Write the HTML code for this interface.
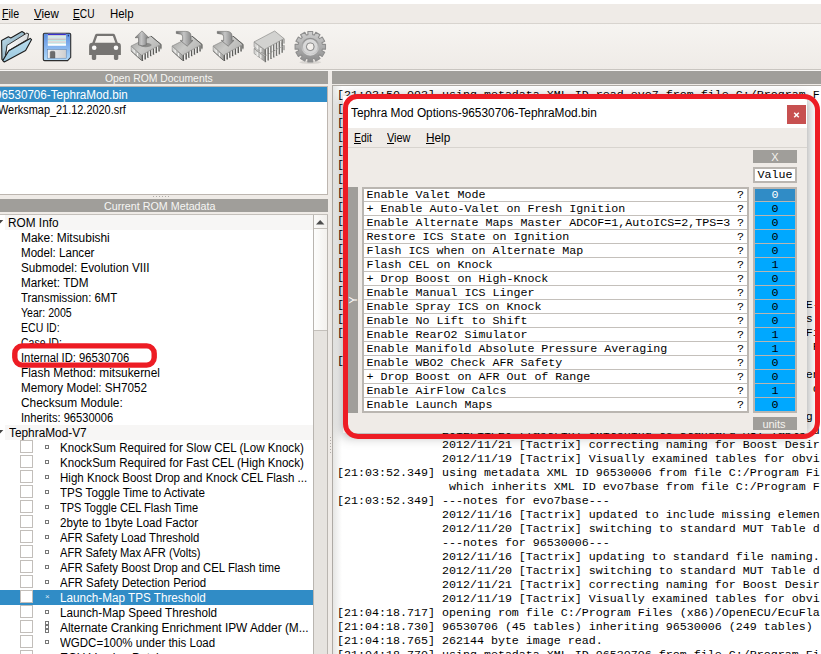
<!DOCTYPE html>
<html><head><meta charset="utf-8"><title>EcuFlash</title>
<style>
html,body{margin:0;padding:0}
body{width:821px;height:654px;overflow:hidden;position:relative;background:#efebe7;font-family:"Liberation Sans", sans-serif;font-size:12px;color:#000}
.a{position:absolute;white-space:pre}
.t{position:absolute;white-space:pre;line-height:17px;height:15px;font-size:12px}
.hdr{position:absolute;background:#a09e9a;color:#fff;font-size:11px;text-align:center;line-height:13px;height:13px}
.m{position:absolute;white-space:pre;font-family:"Liberation Mono", monospace;font-size:11.6667px;line-height:14px;height:14px}
u{text-decoration:underline;text-underline-offset:1px}
.ht{color:#f6f6f4;font-size:11px;line-height:15px;height:13px}
.cb{position:absolute;left:20px;width:11px;height:11px;border:1px solid #c2beba;background:#fff}
.ic{position:absolute;left:45px;width:2px;height:2px;border:1px solid #777}
</style></head>
<body>
<div class="a" style="left:0;top:0;width:821px;height:4px;background:#fff"></div>
<div class="a" style="left:0;top:4px;width:821px;height:19px;background:#efebe7"></div>
<div class="a mi" id="mFile" style="left:1.8px;transform:scaleX(0.8858);transform-origin:0 0;top:7px;line-height:15px"><u>F</u>ile</div>
<div class="a mi" id="mView" style="left:34.4px;transform:scaleX(0.9615);transform-origin:0 0;top:7px;line-height:15px"><u>V</u>iew</div>
<div class="a mi" id="mECU" style="left:73.4px;transform:scaleX(0.8487);transform-origin:0 0;top:7px;line-height:15px"><u>E</u>CU</div>
<div class="a mi" id="mHelp" style="left:109.6px;transform:scaleX(0.9526);transform-origin:0 0;top:7px;line-height:15px">Help</div>
<div class="a" style="left:0;top:23px;width:821px;height:1px;background:#d8d4cf"></div>
<div class="a" style="left:0;top:24px;width:821px;height:45px;background:linear-gradient(#f6f4f1,#efebe7)"></div>
<div class="a" style="left:0;top:69px;width:821px;height:1px;background:#c9c5c0"></div>
<div class="a" style="left:0;top:70px;width:821px;height:1px;background:#f8f6f4"></div>
<svg class="a" style="left:0;top:24px" width="340" height="45" viewBox="0 24 340 45">
<defs>
<linearGradient id="gF1" x1="0" y1="0" x2="1" y2="1"><stop offset="0" stop-color="#c4e4f3"/><stop offset="1" stop-color="#6f8fa0"/></linearGradient>
<linearGradient id="gF2" x1="0" y1="0" x2="0" y2="1"><stop offset="0" stop-color="#b9def0"/><stop offset="1" stop-color="#9cc8de"/></linearGradient>
<linearGradient id="gF3" x1="0" y1="0" x2="1" y2="0"><stop offset="0" stop-color="#fdfdfd"/><stop offset="1" stop-color="#d9dcde"/></linearGradient>
<linearGradient id="gD1" x1="0" y1="0" x2="0" y2="1"><stop offset="0" stop-color="#5b8de0"/><stop offset="1" stop-color="#b2dcfb"/></linearGradient>
<linearGradient id="gD2" x1="0" y1="0" x2="1" y2="0"><stop offset="0" stop-color="#f2f2f2"/><stop offset="1" stop-color="#cfcfcf"/></linearGradient>
<linearGradient id="gC1" x1="0" y1="0" x2="1" y2="0.6"><stop offset="0" stop-color="#a2a2a0"/><stop offset="0.55" stop-color="#c9c9c7"/><stop offset="1" stop-color="#b4b4b2"/></linearGradient>
<linearGradient id="gC2" x1="0" y1="0" x2="1" y2="0"><stop offset="0" stop-color="#dcdcda"/><stop offset="1" stop-color="#a6a6a4"/></linearGradient>
<linearGradient id="gA1" x1="0" y1="0" x2="1" y2="0"><stop offset="0" stop-color="#6a6a6a"/><stop offset="0.45" stop-color="#c6c6c6"/><stop offset="1" stop-color="#7a7a7a"/></linearGradient>
<linearGradient id="gG1" x1="0" y1="0" x2="0" y2="1"><stop offset="0" stop-color="#cfcfcf"/><stop offset="1" stop-color="#8c8c8c"/></linearGradient>
<linearGradient id="gG2" x1="0" y1="0" x2="0" y2="1"><stop offset="0" stop-color="#8f8f8f"/><stop offset="1" stop-color="#d6d6d6"/></linearGradient>
</defs>
<path d="M1.6 40.4 L8.4 36.8 L10.8 37.9 L22.0 31.6 L24.4 33.0 L24.4 38.0 L7.0 47.5 L4.6 61.4 L1.9 59.4 Z" fill="url(#gF1)" stroke="#1c1c1c" stroke-width="1.1" stroke-linejoin="round"/>
<path d="M7.0 45.4 L26.8 33.1 L28.6 33.8 L27.6 39.4 L9.0 50.4 L5.3 58.5 Z" fill="url(#gF3)" stroke="#222" stroke-width="0.9" stroke-linejoin="round"/>
<path d="M8.8 50.7 L30.2 38.4 L31.6 39.6 L25.6 50.6 L4.3 62.0 L2.7 60.6 Z" fill="url(#gF2)" stroke="#1c1c1c" stroke-width="1.1" stroke-linejoin="round"/>
<path d="M44.6 33.2 H69.4 Q70.7 33.2 70.7 34.5 V57.4 L67.6 60.6 H44.6 Q43.3 60.6 43.3 59.3 V34.5 Q43.3 33.2 44.6 33.2 Z" fill="url(#gD1)" stroke="#2e2e2e" stroke-width="1.1"/>
<rect x="47.9" y="33.8" width="18" height="11.7" fill="#fff"/>
<rect x="47.9" y="33.8" width="18" height="1.3" fill="#3a30cf"/>
<rect x="47.9" y="35.1" width="18" height="1.2" fill="#c9c9c9"/>
<rect x="47.9" y="36.4" width="18" height="1.2" fill="#bfe9ea"/>
<rect x="47.9" y="37.6" width="18" height="1.2" fill="#d2d2d2"/>
<rect x="47.9" y="38.8" width="18" height="1.2" fill="#c6c6c6"/>
<rect x="47.9" y="40.0" width="18" height="1.2" fill="#bdeaec"/>
<rect x="47.9" y="41.1" width="18" height="1.2" fill="#dadada"/>
<rect x="47.9" y="42.2" width="18" height="1.2" fill="#d0d0d0"/>
<rect x="47.9" y="43.2" width="18" height="1.2" fill="#c8eff0"/>
<rect x="47.9" y="44" width="18" height="1.6" fill="#fff"/>
<rect x="47.6" y="49.6" width="18.6" height="8.6" fill="url(#gD2)" stroke="#5f7fa8" stroke-width="0.5"/>
<path d="M50.2 58 V52.6 Q50.2 51.2 51.6 51.2 H53.6 Q55 51.2 55 52.6 V58 Z" fill="#6c6c6c" stroke="#555" stroke-width="0.4"/>
<rect x="67.8" y="34.8" width="1.1" height="1.6" fill="#1b2a66"/>
<path d="M92.1 43.4 L95.0 35.2 Q95.5 33.8 97 33.8 H113.1 Q114.6 33.8 115.1 35.2 L118 43.4 L115.6 43.4 L112.9 36.1 H97.3 L94.6 43.4 Z" fill="#767472"/>
<path d="M89.1 46 Q89.1 42.8 92.3 42.8 H117.7 Q120.9 42.8 120.9 46 V54.9 H89.1 Z" fill="#767472"/>
<path d="M91.8 54.5 H96.2 V58.6 Q96.2 60 94.8 60 H93.2 Q91.8 60 91.8 58.6 Z M113.9 54.5 H118.3 V58.6 Q118.3 60 116.9 60 H115.3 Q113.9 60 113.9 58.6 Z" fill="#767472"/>
<circle cx="94.2" cy="47.8" r="2.3" fill="#fbfaf9"/><circle cx="116" cy="47.8" r="2.3" fill="#fbfaf9"/>
<path d="M131.2 46.0 L141.4 55.3 L141.4 60.3 L131.2 51.0 Z" fill="url(#gC2)" stroke="#7e7e7c" stroke-width="0.6"/>
<path d="M134.1 49.8 v4.0" stroke="#f4f4f2" stroke-width="1.2"/>
<path d="M137.5 53.0 v4.0" stroke="#f4f4f2" stroke-width="1.2"/>
<path d="M142.4 54.8 v6.2" stroke="#5c5c5a" stroke-width="1.5"/>
<path d="M143.7 54.0 v6.0" stroke="#f2f2f0" stroke-width="1.1"/>
<path d="M145.2 53.2 v6.2" stroke="#5c5c5a" stroke-width="1.5"/>
<path d="M146.5 52.5 v6.0" stroke="#f2f2f0" stroke-width="1.1"/>
<path d="M147.9 51.6 v6.2" stroke="#5c5c5a" stroke-width="1.5"/>
<path d="M149.2 50.9 v6.0" stroke="#f2f2f0" stroke-width="1.1"/>
<path d="M150.7 50.0 v6.2" stroke="#5c5c5a" stroke-width="1.5"/>
<path d="M152.0 49.3 v6.0" stroke="#f2f2f0" stroke-width="1.1"/>
<path d="M153.5 48.5 v6.2" stroke="#5c5c5a" stroke-width="1.5"/>
<path d="M154.8 47.8 v6.0" stroke="#f2f2f0" stroke-width="1.1"/>
<path d="M156.3 46.9 v6.2" stroke="#5c5c5a" stroke-width="1.5"/>
<path d="M157.6 46.2 v6.0" stroke="#f2f2f0" stroke-width="1.1"/>
<path d="M159.1 45.3 v6.2" stroke="#5c5c5a" stroke-width="1.5"/>
<path d="M160.4 44.6 v6.0" stroke="#f2f2f0" stroke-width="1.1"/>
<path d="M160.9 44.3 v5.0" stroke="#7b7b79" stroke-width="1"/>
<path d="M131.2 46.0 L151.0 36.1 L160.9 44.3 L141.4 55.3 Z" fill="url(#gC1)" stroke="#8a8a88" stroke-width="0.7" stroke-linejoin="round"/>
<path d="M151.0 36.1 L160.9 44.3 v4.0" fill="none" stroke="#5e5e5c" stroke-width="1" stroke-linejoin="round"/>
<path d="M131.2 51.0 L141.4 60.3" fill="none" stroke="#6c6c6a" stroke-width="0.9"/>
<ellipse cx="145.6" cy="45" rx="6" ry="2.2" fill="#8b8b89"/>
<path d="M142 30.9 L148.9 37.7 L146.3 37.7 L146.3 45 Q142.4 46.6 138.5 45 L138.5 37.7 L135 37.7 Z" fill="url(#gA1)" stroke="#6a6a68" stroke-width="0.6" stroke-linejoin="round"/>
<path d="M172.2 46.0 L182.4 55.3 L182.4 60.3 L172.2 51.0 Z" fill="url(#gC2)" stroke="#7e7e7c" stroke-width="0.6"/>
<path d="M175.1 49.8 v4.0" stroke="#f4f4f2" stroke-width="1.2"/>
<path d="M178.5 53.0 v4.0" stroke="#f4f4f2" stroke-width="1.2"/>
<path d="M183.4 54.8 v6.2" stroke="#5c5c5a" stroke-width="1.5"/>
<path d="M184.7 54.0 v6.0" stroke="#f2f2f0" stroke-width="1.1"/>
<path d="M186.2 53.2 v6.2" stroke="#5c5c5a" stroke-width="1.5"/>
<path d="M187.5 52.5 v6.0" stroke="#f2f2f0" stroke-width="1.1"/>
<path d="M188.9 51.6 v6.2" stroke="#5c5c5a" stroke-width="1.5"/>
<path d="M190.2 50.9 v6.0" stroke="#f2f2f0" stroke-width="1.1"/>
<path d="M191.7 50.0 v6.2" stroke="#5c5c5a" stroke-width="1.5"/>
<path d="M193.0 49.3 v6.0" stroke="#f2f2f0" stroke-width="1.1"/>
<path d="M194.5 48.5 v6.2" stroke="#5c5c5a" stroke-width="1.5"/>
<path d="M195.8 47.8 v6.0" stroke="#f2f2f0" stroke-width="1.1"/>
<path d="M197.3 46.9 v6.2" stroke="#5c5c5a" stroke-width="1.5"/>
<path d="M198.6 46.2 v6.0" stroke="#f2f2f0" stroke-width="1.1"/>
<path d="M200.1 45.3 v6.2" stroke="#5c5c5a" stroke-width="1.5"/>
<path d="M201.4 44.6 v6.0" stroke="#f2f2f0" stroke-width="1.1"/>
<path d="M201.9 44.3 v5.0" stroke="#7b7b79" stroke-width="1"/>
<path d="M172.2 46.0 L192.0 36.1 L201.9 44.3 L182.4 55.3 Z" fill="url(#gC1)" stroke="#8a8a88" stroke-width="0.7" stroke-linejoin="round"/>
<path d="M192.0 36.1 L201.9 44.3 v4.0" fill="none" stroke="#5e5e5c" stroke-width="1" stroke-linejoin="round"/>
<path d="M172.2 51.0 L182.4 60.3" fill="none" stroke="#6c6c6a" stroke-width="0.9"/>
<path d="M176.3 31.4 H185.8 Q191.0 31.4 191.0 36 V40.4 H193.0 L187.2 46.2 L180.2 40.4 H182.6 V36.8 Q182.6 34.6 180.6 34.2 L176.3 33.4 Z" fill="url(#gA1)" stroke="#6a6a68" stroke-width="0.6" stroke-linejoin="round"/>
<path d="M213.2 46.0 L223.4 55.3 L223.4 60.3 L213.2 51.0 Z" fill="url(#gC2)" stroke="#7e7e7c" stroke-width="0.6"/>
<path d="M216.1 49.8 v4.0" stroke="#f4f4f2" stroke-width="1.2"/>
<path d="M219.5 53.0 v4.0" stroke="#f4f4f2" stroke-width="1.2"/>
<path d="M224.4 54.8 v6.2" stroke="#5c5c5a" stroke-width="1.5"/>
<path d="M225.7 54.0 v6.0" stroke="#f2f2f0" stroke-width="1.1"/>
<path d="M227.2 53.2 v6.2" stroke="#5c5c5a" stroke-width="1.5"/>
<path d="M228.5 52.5 v6.0" stroke="#f2f2f0" stroke-width="1.1"/>
<path d="M229.9 51.6 v6.2" stroke="#5c5c5a" stroke-width="1.5"/>
<path d="M231.2 50.9 v6.0" stroke="#f2f2f0" stroke-width="1.1"/>
<path d="M232.7 50.0 v6.2" stroke="#5c5c5a" stroke-width="1.5"/>
<path d="M234.0 49.3 v6.0" stroke="#f2f2f0" stroke-width="1.1"/>
<path d="M235.5 48.5 v6.2" stroke="#5c5c5a" stroke-width="1.5"/>
<path d="M236.8 47.8 v6.0" stroke="#f2f2f0" stroke-width="1.1"/>
<path d="M238.3 46.9 v6.2" stroke="#5c5c5a" stroke-width="1.5"/>
<path d="M239.6 46.2 v6.0" stroke="#f2f2f0" stroke-width="1.1"/>
<path d="M241.1 45.3 v6.2" stroke="#5c5c5a" stroke-width="1.5"/>
<path d="M242.4 44.6 v6.0" stroke="#f2f2f0" stroke-width="1.1"/>
<path d="M242.9 44.3 v5.0" stroke="#7b7b79" stroke-width="1"/>
<path d="M213.2 46.0 L233.0 36.1 L242.9 44.3 L223.4 55.3 Z" fill="url(#gC1)" stroke="#8a8a88" stroke-width="0.7" stroke-linejoin="round"/>
<path d="M233.0 36.1 L242.9 44.3 v4.0" fill="none" stroke="#5e5e5c" stroke-width="1" stroke-linejoin="round"/>
<path d="M213.2 51.0 L223.4 60.3" fill="none" stroke="#6c6c6a" stroke-width="0.9"/>
<path d="M217.3 31.4 H226.8 Q232.0 31.4 232.0 36 V40.4 H234.0 L228.2 46.2 L221.2 40.4 H223.6 V36.8 Q223.6 34.6 221.6 34.2 L217.3 33.4 Z" fill="url(#gA1)" stroke="#6a6a68" stroke-width="0.6" stroke-linejoin="round"/>
<path d="M254.1 48.5 L264.4 56.1 L264.4 61.1 L254.1 53.5 Z" fill="url(#gC2)" stroke="#7e7e7c" stroke-width="0.6"/>
<path d="M257.2 52.0 v4.0" stroke="#f4f4f2" stroke-width="1.2"/>
<path d="M260.8 54.6 v4.0" stroke="#f4f4f2" stroke-width="1.2"/>
<path d="M265.4 55.6 v6.6" stroke="#737371" stroke-width="1.5"/>
<path d="M266.7 54.9 v6.4" stroke="#f2f2f0" stroke-width="1.1"/>
<path d="M268.2 54.0 v6.6" stroke="#737371" stroke-width="1.5"/>
<path d="M269.5 53.3 v6.4" stroke="#f2f2f0" stroke-width="1.1"/>
<path d="M271.0 52.4 v6.6" stroke="#737371" stroke-width="1.5"/>
<path d="M272.3 51.7 v6.4" stroke="#f2f2f0" stroke-width="1.1"/>
<path d="M273.8 50.9 v6.6" stroke="#737371" stroke-width="1.5"/>
<path d="M275.1 50.2 v6.4" stroke="#f2f2f0" stroke-width="1.1"/>
<path d="M276.6 49.3 v6.6" stroke="#737371" stroke-width="1.5"/>
<path d="M277.9 48.6 v6.4" stroke="#f2f2f0" stroke-width="1.1"/>
<path d="M279.4 47.8 v6.6" stroke="#737371" stroke-width="1.5"/>
<path d="M280.7 47.1 v6.4" stroke="#f2f2f0" stroke-width="1.1"/>
<path d="M282.2 46.2 v6.6" stroke="#737371" stroke-width="1.5"/>
<path d="M283.5 45.5 v6.4" stroke="#f2f2f0" stroke-width="1.1"/>
<path d="M284 45.2 v5.0" stroke="#7b7b79" stroke-width="1"/>
<path d="M254.1 48.5 L274.7 37.6 L284 45.2 L264.4 56.1 Z" fill="#d2d2d0" stroke="#8c8c8a" stroke-width="0.7" stroke-linejoin="round"/>
<path d="M254.1 41.9 L264.4 49.5 L264.4 54.5 L254.1 46.9 Z" fill="url(#gC2)" stroke="#7e7e7c" stroke-width="0.6"/>
<path d="M257.2 45.4 v4.0" stroke="#f4f4f2" stroke-width="1.2"/>
<path d="M260.8 48.0 v4.0" stroke="#f4f4f2" stroke-width="1.2"/>
<path d="M265.4 49.0 v6.6" stroke="#737371" stroke-width="1.5"/>
<path d="M266.7 48.3 v6.4" stroke="#f2f2f0" stroke-width="1.1"/>
<path d="M268.2 47.4 v6.6" stroke="#737371" stroke-width="1.5"/>
<path d="M269.5 46.7 v6.4" stroke="#f2f2f0" stroke-width="1.1"/>
<path d="M271.0 45.8 v6.6" stroke="#737371" stroke-width="1.5"/>
<path d="M272.3 45.1 v6.4" stroke="#f2f2f0" stroke-width="1.1"/>
<path d="M273.8 44.3 v6.6" stroke="#737371" stroke-width="1.5"/>
<path d="M275.1 43.6 v6.4" stroke="#f2f2f0" stroke-width="1.1"/>
<path d="M276.6 42.7 v6.6" stroke="#737371" stroke-width="1.5"/>
<path d="M277.9 42.0 v6.4" stroke="#f2f2f0" stroke-width="1.1"/>
<path d="M279.4 41.2 v6.6" stroke="#737371" stroke-width="1.5"/>
<path d="M280.7 40.5 v6.4" stroke="#f2f2f0" stroke-width="1.1"/>
<path d="M282.2 39.6 v6.6" stroke="#737371" stroke-width="1.5"/>
<path d="M283.5 38.9 v6.4" stroke="#f2f2f0" stroke-width="1.1"/>
<path d="M284 38.6 v5.0" stroke="#7b7b79" stroke-width="1"/>
<path d="M254.1 41.9 L274.7 31 L284 38.6 L264.4 49.5 Z" fill="#d2d2d0" stroke="#8c8c8a" stroke-width="0.7" stroke-linejoin="round"/>
<ellipse cx="310.3" cy="62.300000000000004" rx="11" ry="1.6" fill="#000" opacity="0.10"/>
<path d="M307.98 34.62 L307.85 31.50 L312.75 31.50 L312.62 34.62 L314.33 35.08 L315.78 32.31 L320.03 34.76 L318.35 37.40 L319.60 38.65 L322.24 36.97 L324.69 41.22 L321.92 42.67 L322.38 44.38 L325.50 44.25 L325.50 49.15 L322.38 49.02 L321.92 50.73 L324.69 52.18 L322.24 56.43 L319.60 54.75 L318.35 56.00 L320.03 58.64 L315.78 61.09 L314.33 58.32 L312.62 58.78 L312.75 61.90 L307.85 61.90 L307.98 58.78 L306.27 58.32 L304.82 61.09 L300.57 58.64 L302.25 56.00 L301.00 54.75 L298.36 56.43 L295.91 52.18 L298.68 50.73 L298.22 49.02 L295.10 49.15 L295.10 44.25 L298.22 44.38 L298.68 42.67 L295.91 41.22 L298.36 36.97 L301.00 38.65 L302.25 37.40 L300.57 34.76 L304.82 32.31 L306.27 35.08 Z M314.20 46.70 A3.9 3.9 0 1 0 306.40 46.70 A3.9 3.9 0 1 0 314.20 46.70 Z" fill="url(#gG1)" fill-rule="evenodd" stroke="#8e8e8e" stroke-width="1.1" stroke-linejoin="round"/>
<circle cx="310.3" cy="46.7" r="8.2" fill="none" stroke="url(#gG2)" stroke-width="1.6"/>
<circle cx="310.3" cy="46.7" r="5.7" fill="none" stroke="#e2e2e2" stroke-width="3.4" opacity="0.8"/>
<circle cx="310.3" cy="46.7" r="3.9" fill="none" stroke="#8a8a8a" stroke-width="0.7"/>
</svg>
<div class="hdr" style="left:0;top:71px;width:328px"></div>
<div class="a ht" id="h1" style="left:105.2px;transform:scaleX(0.9422);transform-origin:0 0;top:71px">Open ROM Documents</div>
<div class="a" style="left:-2px;top:86px;width:328px;height:107px;background:#fff;border:1px solid #bdb6b0"></div>
<div class="a" style="left:0;top:87px;width:327px;height:15px;background:#308cc6"></div>
<div class="t" style="left:-4.6px;transform:scaleX(0.9701);transform-origin:0 0;top:87px;color:#fff"><span class="fc">9</span><span id="doc1">6530706-TephraMod.bin</span></div>
<div class="t" style="left:-2.4px;transform:scaleX(0.9099);transform-origin:0 0;top:102px"><span class="fc">W</span><span id="doc2">erksmap_21.12.2020.srf</span></div>
<div class="a" style="left:153px;top:196px;width:16px;height:1px;background:repeating-linear-gradient(90deg,#b0aca8 0 1px,transparent 1px 3px)"></div>
<div class="hdr" style="left:0;top:199px;width:328px"></div>
<div class="a ht" id="h2" style="left:103.8px;transform:scaleX(0.9754);transform-origin:0 0;top:199px">Current ROM Metadata</div>
<div class="a" style="left:-2px;top:214px;width:328px;height:460px;background:#fff;border:1px solid #c4c0bb"></div>
<div class="a" style="left:5px;top:215px;width:308px;height:15px;background:#f7f6f5"></div>
<div class="a" style="left:5px;top:425px;width:308px;height:15px;background:#f7f6f5"></div>
<svg class="a" style="left:0;top:219px" width="4" height="6"><path d="M-3.4 1 L3.3 1 L0 4.4 Z" fill="#444"/></svg>
<svg class="a" style="left:0;top:429px" width="4" height="6"><path d="M-3.4 1 L3.3 1 L0 4.4 Z" fill="#444"/></svg>
<div class="t" id="r0" style="left:8.2px;transform:scaleX(0.9845);transform-origin:0 0;top:215px">ROM Info</div>
<div class="t" id="r1" style="left:20.8px;transform:scaleX(0.9933);transform-origin:0 0;top:230px">Make: Mitsubishi</div>
<div class="t" id="r2" style="left:20.8px;transform:scaleX(0.9659);transform-origin:0 0;top:245px">Model: Lancer</div>
<div class="t" id="r3" style="left:20.8px;transform:scaleX(0.9787);transform-origin:0 0;top:260px">Submodel: Evolution VIII</div>
<div class="t" id="r4" style="left:20.8px;transform:scaleX(0.977);transform-origin:0 0;top:275px">Market: TDM</div>
<div class="t" id="r5" style="left:20.8px;transform:scaleX(0.947);transform-origin:0 0;top:290px">Transmission: 6MT</div>
<div class="t" id="r6" style="left:20.8px;transform:scaleX(0.8793);transform-origin:0 0;top:305px">Year: 2005</div>
<div class="t" id="r7" style="left:20.8px;transform:scaleX(0.8776);transform-origin:0 0;top:320px">ECU ID:</div>
<div class="t" id="r8" style="left:20.8px;transform:scaleX(0.8741);transform-origin:0 0;top:335px">Case ID:</div>
<div class="t" id="r9" style="left:20.8px;transform:scaleX(0.9369);transform-origin:0 0;top:350px">Internal ID: 96530706</div>
<div class="t" id="r10" style="left:20.8px;transform:scaleX(0.9872);transform-origin:0 0;top:365px">Flash Method: mitsukernel</div>
<div class="t" id="r11" style="left:20.8px;transform:scaleX(0.9736);transform-origin:0 0;top:380px">Memory Model: SH7052</div>
<div class="t" id="r12" style="left:20.8px;transform:scaleX(0.9902);transform-origin:0 0;top:395px">Checksum Module:</div>
<div class="t" id="r13" style="left:20.8px;transform:scaleX(0.9268);transform-origin:0 0;top:410px">Inherits: 96530006</div>
<div class="t" id="r14" style="left:9.0px;transform:scaleX(0.9873);transform-origin:0 0;top:425px">TephraMod-V7</div>
<div class="cb" style="top:440px"></div>
<div class="ic" style="top:445px"></div>
<div class="t" id="k0" style="left:60.4px;transform:scaleX(0.9636);transform-origin:0 0;top:440px;">KnockSum Required for Slow CEL (Low Knock)</div>
<div class="cb" style="top:455px"></div>
<div class="ic" style="top:460px"></div>
<div class="t" id="k1" style="left:60.4px;transform:scaleX(0.9636);transform-origin:0 0;top:455px;">KnockSum Required for Fast CEL (High Knock)</div>
<div class="cb" style="top:470px"></div>
<div class="ic" style="top:475px"></div>
<div class="t" id="k2" style="left:60.4px;transform:scaleX(0.9618);transform-origin:0 0;top:470px;">High Knock Boost Drop and Knock CEL Flash ...</div>
<div class="cb" style="top:485px"></div>
<div class="ic" style="top:490px"></div>
<div class="t" id="k3" style="left:60.4px;transform:scaleX(0.968);transform-origin:0 0;top:485px;">TPS Toggle Time to Activate</div>
<div class="cb" style="top:500px"></div>
<div class="ic" style="top:505px"></div>
<div class="t" id="k4" style="left:60.4px;transform:scaleX(0.92);transform-origin:0 0;top:500px;">TPS Toggle CEL Flash Time</div>
<div class="cb" style="top:515px"></div>
<div class="ic" style="top:520px"></div>
<div class="t" id="k5" style="left:60.4px;transform:scaleX(0.9678);transform-origin:0 0;top:515px;">2byte to 1byte Load Factor</div>
<div class="cb" style="top:530px"></div>
<div class="ic" style="top:535px"></div>
<div class="t" id="k6" style="left:60.4px;transform:scaleX(0.942);transform-origin:0 0;top:530px;">AFR Safety Load Threshold</div>
<div class="cb" style="top:545px"></div>
<div class="ic" style="top:550px"></div>
<div class="t" id="k7" style="left:60.4px;transform:scaleX(0.9286);transform-origin:0 0;top:545px;">AFR Safety Max AFR (Volts)</div>
<div class="cb" style="top:560px"></div>
<div class="ic" style="top:565px"></div>
<div class="t" id="k8" style="left:60.4px;transform:scaleX(0.9451);transform-origin:0 0;top:560px;">AFR Safety Boost Drop and CEL Flash time</div>
<div class="cb" style="top:575px"></div>
<div class="ic" style="top:580px"></div>
<div class="t" id="k9" style="left:60.4px;transform:scaleX(0.9529);transform-origin:0 0;top:575px;">AFR Safety Detection Period</div>
<div class="a" style="left:0;top:590px;width:313px;height:15px;background:#308cc6"></div>
<div class="cb" style="top:590px"></div>
<div class="a" style="left:45px;top:595px;width:4px;height:4px;color:#dfe9f3;font-size:8px;line-height:4px">×</div>
<div class="t" id="k10" style="left:60.4px;transform:scaleX(0.9743);transform-origin:0 0;top:590px;color:#fff;">Launch-Map TPS Threshold</div>
<div class="cb" style="top:605px"></div>
<div class="ic" style="top:610px"></div>
<div class="t" id="k11" style="left:60.4px;transform:scaleX(0.9739);transform-origin:0 0;top:605px;">Launch-Map Speed Threshold</div>
<div class="cb" style="top:620px"></div>
<div class="ic" style="top:621px"></div>
<div class="ic" style="top:625px"></div>
<div class="ic" style="top:629px"></div>
<div class="t" id="k12" style="left:60.4px;transform:scaleX(0.9889);transform-origin:0 0;top:620px;">Alternate Cranking Enrichment IPW Adder (M...</div>
<div class="cb" style="top:635px"></div>
<div class="ic" style="top:640px"></div>
<div class="t" id="k13" style="left:60.4px;transform:scaleX(0.9589);transform-origin:0 0;top:635px;">WGDC=100% under this Load</div>
<div class="cb" style="top:650px"></div>
<div class="ic" style="top:655px"></div>
<div class="t" id="k14" style="left:60px;top:650px;">ECU Version Patch</div>
<svg class="a anno" style="left:0;top:335px" width="170" height="40"><rect x="14.8" y="10.9" width="139.4" height="19.2" rx="7.5" ry="7.5" fill="none" stroke="#ed1c24" stroke-width="5.4"/></svg>
<div class="a sb" style="left:313px;top:215px;width:14px;height:440px;background:#e6e3df;border-left:1px solid #b9b5b0"></div>
<div class="a" style="left:314px;top:215px;width:13px;height:13px;background:linear-gradient(90deg,#fbfaf9,#f1efec);border-bottom:1px solid #c4c0bb"></div>
<svg class="a" style="left:316px;top:219.5px" width="9" height="5"><path d="M0 4.6 L4.2 0 L8.4 4.6 Z" fill="#4c4c4c"/></svg>
<div class="a" style="left:327px;top:215px;width:1px;height:440px;background:#b9b5b0"></div>
<div class="a" style="left:314px;top:229px;width:13px;height:101px;background:linear-gradient(90deg,#fdfdfc,#f3f1ee);border-bottom:1px solid #c4c0bb"></div>
<div class="a" style="left:330px;top:437px;width:1px;height:16px;background:repeating-linear-gradient(180deg,#b0aca8 0 1px,transparent 1px 3px)"></div>
<div class="hdr" style="left:332px;top:71px;width:489px"></div>
<div class="a" style="left:332px;top:85px;width:500px;height:580px;background:#fff;border:1px solid #aeaaa5"></div>
<div class="a" style="left:333px;top:86px;width:9px;height:568px;background:linear-gradient(90deg,#e6e6e4,#fff)"></div>
<div class="m" id="L0" style="left:337px;top:88px">[21:03:50.093] using metadata XML ID read evo7 from file C:/Program F</div>
<div class="m" id="L1" style="left:337px;top:102px">[21:03:50.093] ---notes for evo7---</div>
<div class="m" id="L2" style="left:337px;top:116px">[21:03:50.101] opening rom file C:/Program Files (x86)/OpenE</div>
<div class="m" id="L3" style="left:337px;top:130px">[21:03:50.113] 96530706 (45 tables) inheriting 96530006 (249</div>
<div class="m" id="L4" style="left:337px;top:144px">[21:03:50.139] 262144 byte image read.</div>
<div class="m" id="L5" style="left:337px;top:158px">[21:03:50.144] using metadata XML ID 96530706 from file C:/P</div>
<div class="m" id="L6" style="left:337px;top:172px">[21:03:50.144] which inherits XML ID 96530006 from file C:/P</div>
<div class="m" id="L7" style="left:337px;top:186px">[21:03:50.144] ---notes for 96530706---</div>
<div class="m" id="L8" style="left:337px;top:200px">[21:03:50.151] 2012/11/16 [Tactrix] updating to standard fil</div>
<div class="m" id="L9" style="left:337px;top:214px">[21:03:50.151] 2012/11/20 [Tactrix] switching to standard MU</div>
<div class="m" id="L10" style="left:337px;top:228px">[21:03:50.151] 2012/11/21 [Tactrix] correcting naming for Bo</div>
<div class="m" id="L11" style="left:337px;top:242px">[21:03:50.151] 2012/11/19 [Tactrix] Visually examined tables</div>
<div class="m" id="L12" style="left:337px;top:256px">[21:03:52.301] opening rom file C:/Program Files (x86)/OpenE</div>
<div class="m" id="L13" style="left:337px;top:270px">[21:03:52.312] 96530706 (45 tables) inheriting 96530006 (249</div>
<div class="m" id="L14" style="left:337px;top:284px">[21:03:52.340] 262144 byte image read.</div>
<div class="m" id="L15" style="left:337px;top:298px">[21:03:52.344] using metadata XML ID 96530706 from file C:/Program E-</div>
<div class="m" id="L16" style="left:337px;top:312px">[21:03:52.344] ---notes for 96530706---                            s</div>
<div class="m" id="L17" style="left:337px;top:326px">[21:03:52.349] using metadata XML ID 96530006 from file C:/Program Fi</div>
<div class="m" id="L18" style="left:337px;top:340px">                which inherits XML ID evo7base from file C:/Program F</div>
<div class="m" id="L19" style="left:337px;top:354px">[21:03:52.349] ---notes for evo7base---</div>
<div class="m" id="L20" style="left:337px;top:368px">               2012/11/16 [Tactrix] updated to include missing elemen</div>
<div class="m" id="L21" style="left:337px;top:382px">               2012/11/20 [Tactrix] switching to standard MUT Table d</div>
<div class="m" id="L22" style="left:337px;top:396px">               ---notes for 96530006---</div>
<div class="m" id="L23" style="left:337px;top:410px">               2012/11/16 [Tactrix] updating to standard file naming.</div>
<div class="m" id="L24" style="left:337px;top:424px">               2012/11/20 [Tactrix] switching to standard MUT Table d</div>
<div class="m" id="L25" style="left:337px;top:438px">               2012/11/21 [Tactrix] correcting naming for Boost Desir</div>
<div class="m" id="L26" style="left:337px;top:452px">               2012/11/19 [Tactrix] Visually examined tables for obvi</div>
<div class="m" id="L27" style="left:337px;top:466px">[21:03:52.349] using metadata XML ID 96530006 from file C:/Program Fi</div>
<div class="m" id="L28" style="left:337px;top:480px">                which inherits XML ID evo7base from file C:/Program F</div>
<div class="m" id="L29" style="left:337px;top:494px">[21:03:52.349] ---notes for evo7base---</div>
<div class="m" id="L30" style="left:337px;top:508px">               2012/11/16 [Tactrix] updated to include missing elemen</div>
<div class="m" id="L31" style="left:337px;top:522px">               2012/11/20 [Tactrix] switching to standard MUT Table d</div>
<div class="m" id="L32" style="left:337px;top:536px">               ---notes for 96530006---</div>
<div class="m" id="L33" style="left:337px;top:550px">               2012/11/16 [Tactrix] updating to standard file naming.</div>
<div class="m" id="L34" style="left:337px;top:564px">               2012/11/20 [Tactrix] switching to standard MUT Table d</div>
<div class="m" id="L35" style="left:337px;top:578px">               2012/11/21 [Tactrix] correcting naming for Boost Desir</div>
<div class="m" id="L36" style="left:337px;top:592px">               2012/11/19 [Tactrix] Visually examined tables for obvi</div>
<div class="m" id="L37" style="left:337px;top:606px">[21:04:18.717] opening rom file C:/Program Files (x86)/OpenECU/EcuFla</div>
<div class="m" id="L38" style="left:337px;top:620px">[21:04:18.730] 96530706 (45 tables) inheriting 96530006 (249 tables)</div>
<div class="m" id="L39" style="left:337px;top:634px">[21:04:18.765] 262144 byte image read.</div>
<div class="m" id="L40" style="left:337px;top:648px">[21:04:18.770] using metadata XML ID 96530706 from file C:/Program Fi</div>
<div class="a" style="left:343px;top:96px;width:464px;height:337px;background:#efebe7;box-shadow:0 2px 12px 0 rgba(0,0,0,.42)"></div>
<div class="a" style="left:343px;top:96px;width:464px;height:32px;background:#fff"></div>
<div class="a" id="dlg" style="left:348px;top:99px;width:459px;height:334px;background:#efebe7">
<div class="a" style="left:0;top:0;width:459px;height:29px;background:#fff"></div>
<div class="a" id="dt" style="left:2.6px;transform:scaleX(0.9877);transform-origin:0 0;top:7px;line-height:15px;font-size:12px">Tephra Mod Options-96530706-TephraMod.bin</div>
<div class="a" style="left:439px;top:6px;width:19px;height:19px;background:#c75050"></div>
<svg class="a" style="left:439px;top:6px" width="19" height="19"><path d="M7.2 7.7 L11.8 12.3 M11.8 7.7 L7.2 12.3" stroke="#fff" stroke-width="1.5"/></svg>
<div class="a" id="dEdit" style="left:6.2px;transform:scaleX(0.8673);transform-origin:0 0;top:32px;line-height:15px"><u>E</u>dit</div>
<div class="a" id="dView" style="left:38.8px;transform:scaleX(0.9089);transform-origin:0 0;top:32px;line-height:15px"><u>V</u>iew</div>
<div class="a" id="dHelp" style="left:77.8px;transform:scaleX(0.9846);transform-origin:0 0;top:32px;line-height:15px"><u>H</u>elp</div>
<div class="a" style="left:0;top:48px;width:459px;height:1px;background:#d8d4cf"></div>
<div class="a" style="left:405px;top:51px;width:44px;height:13px;background:#a09e9a;color:#f4f2ee;text-align:center;font-size:11px;line-height:14px">X</div>
<div class="a" style="left:405px;top:68px;width:40px;height:12px;border:2px solid #bab6b1;background:#fff"></div>
<div class="m" style="left:407px;top:69px;width:40px;text-align:center">Value</div>
<div class="a" style="left:405px;top:318px;width:44px;height:13px;background:#a09e9a;color:#f4f2ee;text-align:center;font-size:11px;line-height:15px;text-indent:-2px">units</div>
<div class="a" style="left:0;top:88px;width:10px;height:226px;background:#a09e9a"></div>
<div class="a" style="left:-1px;top:195px;width:12px;height:12px;color:#fff;font-size:11px;line-height:12px;transform:rotate(-90deg);text-align:center">Y</div>
<div class="a" style="left:14px;top:88px;width:383px;height:222px;border:2px solid #bab6b1;background:#fff"></div>
<div class="a" style="left:405px;top:88px;width:40px;height:222px;border:2px solid #bab6b1;background:#00a8ff"></div>
<div class="a" style="left:407px;top:90px;width:40px;height:12px;background:#308cc6"></div>
<div class="a" style="left:16px;top:102px;width:383px;height:1px;background:#c4c0bb"></div>
<div class="a" style="left:407px;top:102px;width:40px;height:1px;background:#b9b5b0"></div>
<div class="m" style="left:18.5px;top:89px">Enable Valet Mode</div>
<div class="m" style="left:389px;top:89px">?</div>
<div class="m" style="left:407px;top:89px;width:40px;text-align:center;color:#fff;">0</div>
<div class="a" style="left:16px;top:116px;width:383px;height:1px;background:#c4c0bb"></div>
<div class="a" style="left:407px;top:116px;width:40px;height:1px;background:#b9b5b0"></div>
<div class="m" style="left:18.5px;top:103px">+ Enable Auto-Valet on Fresh Ignition</div>
<div class="m" style="left:389px;top:103px">?</div>
<div class="m" style="left:407px;top:103px;width:40px;text-align:center;">0</div>
<div class="a" style="left:16px;top:130px;width:383px;height:1px;background:#c4c0bb"></div>
<div class="a" style="left:407px;top:130px;width:40px;height:1px;background:#b9b5b0"></div>
<div class="m" style="left:18.5px;top:117px">Enable Alternate Maps Master ADCOF=1,AutoICS=2,TPS=3</div>
<div class="m" style="left:389px;top:117px">?</div>
<div class="m" style="left:407px;top:117px;width:40px;text-align:center;">0</div>
<div class="a" style="left:16px;top:144px;width:383px;height:1px;background:#c4c0bb"></div>
<div class="a" style="left:407px;top:144px;width:40px;height:1px;background:#b9b5b0"></div>
<div class="m" style="left:18.5px;top:131px">Restore ICS State on Ignition</div>
<div class="m" style="left:389px;top:131px">?</div>
<div class="m" style="left:407px;top:131px;width:40px;text-align:center;">0</div>
<div class="a" style="left:16px;top:158px;width:383px;height:1px;background:#c4c0bb"></div>
<div class="a" style="left:407px;top:158px;width:40px;height:1px;background:#b9b5b0"></div>
<div class="m" style="left:18.5px;top:145px">Flash ICS when on Alternate Map</div>
<div class="m" style="left:389px;top:145px">?</div>
<div class="m" style="left:407px;top:145px;width:40px;text-align:center;">0</div>
<div class="a" style="left:16px;top:172px;width:383px;height:1px;background:#c4c0bb"></div>
<div class="a" style="left:407px;top:172px;width:40px;height:1px;background:#b9b5b0"></div>
<div class="m" style="left:18.5px;top:159px">Flash CEL on Knock</div>
<div class="m" style="left:389px;top:159px">?</div>
<div class="m" style="left:407px;top:159px;width:40px;text-align:center;">1</div>
<div class="a" style="left:16px;top:186px;width:383px;height:1px;background:#c4c0bb"></div>
<div class="a" style="left:407px;top:186px;width:40px;height:1px;background:#b9b5b0"></div>
<div class="m" style="left:18.5px;top:173px">+ Drop Boost on High-Knock</div>
<div class="m" style="left:389px;top:173px">?</div>
<div class="m" style="left:407px;top:173px;width:40px;text-align:center;">0</div>
<div class="a" style="left:16px;top:200px;width:383px;height:1px;background:#c4c0bb"></div>
<div class="a" style="left:407px;top:200px;width:40px;height:1px;background:#b9b5b0"></div>
<div class="m" style="left:18.5px;top:187px">Enable Manual ICS Linger</div>
<div class="m" style="left:389px;top:187px">?</div>
<div class="m" style="left:407px;top:187px;width:40px;text-align:center;">0</div>
<div class="a" style="left:16px;top:214px;width:383px;height:1px;background:#c4c0bb"></div>
<div class="a" style="left:407px;top:214px;width:40px;height:1px;background:#b9b5b0"></div>
<div class="m" style="left:18.5px;top:201px">Enable Spray ICS on Knock</div>
<div class="m" style="left:389px;top:201px">?</div>
<div class="m" style="left:407px;top:201px;width:40px;text-align:center;">0</div>
<div class="a" style="left:16px;top:228px;width:383px;height:1px;background:#c4c0bb"></div>
<div class="a" style="left:407px;top:228px;width:40px;height:1px;background:#b9b5b0"></div>
<div class="m" style="left:18.5px;top:215px">Enable No Lift to Shift</div>
<div class="m" style="left:389px;top:215px">?</div>
<div class="m" style="left:407px;top:215px;width:40px;text-align:center;">0</div>
<div class="a" style="left:16px;top:242px;width:383px;height:1px;background:#c4c0bb"></div>
<div class="a" style="left:407px;top:242px;width:40px;height:1px;background:#b9b5b0"></div>
<div class="m" style="left:18.5px;top:229px">Enable RearO2 Simulator</div>
<div class="m" style="left:389px;top:229px">?</div>
<div class="m" style="left:407px;top:229px;width:40px;text-align:center;">1</div>
<div class="a" style="left:16px;top:256px;width:383px;height:1px;background:#c4c0bb"></div>
<div class="a" style="left:407px;top:256px;width:40px;height:1px;background:#b9b5b0"></div>
<div class="m" style="left:18.5px;top:243px">Enable Manifold Absolute Pressure Averaging</div>
<div class="m" style="left:389px;top:243px">?</div>
<div class="m" style="left:407px;top:243px;width:40px;text-align:center;">1</div>
<div class="a" style="left:16px;top:270px;width:383px;height:1px;background:#c4c0bb"></div>
<div class="a" style="left:407px;top:270px;width:40px;height:1px;background:#b9b5b0"></div>
<div class="m" style="left:18.5px;top:257px">Enable WBO2 Check AFR Safety</div>
<div class="m" style="left:389px;top:257px">?</div>
<div class="m" style="left:407px;top:257px;width:40px;text-align:center;">0</div>
<div class="a" style="left:16px;top:284px;width:383px;height:1px;background:#c4c0bb"></div>
<div class="a" style="left:407px;top:284px;width:40px;height:1px;background:#b9b5b0"></div>
<div class="m" style="left:18.5px;top:271px">+ Drop Boost on AFR Out of Range</div>
<div class="m" style="left:389px;top:271px">?</div>
<div class="m" style="left:407px;top:271px;width:40px;text-align:center;">0</div>
<div class="a" style="left:16px;top:298px;width:383px;height:1px;background:#c4c0bb"></div>
<div class="a" style="left:407px;top:298px;width:40px;height:1px;background:#b9b5b0"></div>
<div class="m" style="left:18.5px;top:285px">Enable AirFlow Calcs</div>
<div class="m" style="left:389px;top:285px">?</div>
<div class="m" style="left:407px;top:285px;width:40px;text-align:center;">1</div>
<div class="m" style="left:18.5px;top:299px">Enable Launch Maps</div>
<div class="m" style="left:389px;top:299px">?</div>
<div class="m" style="left:407px;top:299px;width:40px;text-align:center;">0</div>
</div>
<div class="a anno" style="left:343px;top:94px;width:467px;height:335px;border:5px solid #ed1c24;border-radius:14px 16px 17px 15px"></div>
</body></html>
